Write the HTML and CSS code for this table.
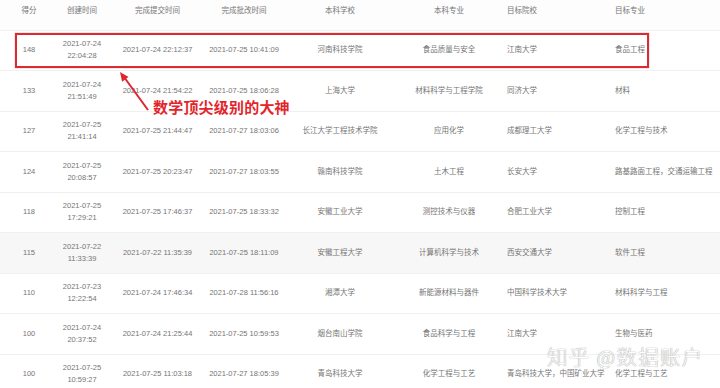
FILE: index.html
```html
<!DOCTYPE html>
<html lang="zh">
<head>
<meta charset="utf-8">
<link rel="stylesheet" href="styles.css">
</head>
<body>
<div class="page">
  <div class="table">
    <div class="row head">
      <div class="c">得分</div><div class="c">创建时间</div><div class="c">完成提交时间</div><div class="c">完成批改时间</div><div class="c">本科学校</div><div class="c">本科专业</div><div class="c l1">目标院校</div><div class="c l2">目标专业</div>
    </div>
    <div class="row">
      <div class="c">148</div><div class="c two"><span>2021-07-24</span><span>22:04:28</span></div><div class="c">2021-07-24 22:12:37</div><div class="c">2021-07-25 10:41:09</div><div class="c">河南科技学院</div><div class="c">食品质量与安全</div><div class="c l1">江南大学</div><div class="c l2">食品工程</div>
    </div>
    <div class="row">
      <div class="c">133</div><div class="c two"><span>2021-07-24</span><span>21:51:49</span></div><div class="c">2021-07-24 21:54:22</div><div class="c">2021-07-25 18:06:28</div><div class="c">上海大学</div><div class="c">材料科学与工程学院</div><div class="c l1">同济大学</div><div class="c l2">材料</div>
    </div>
    <div class="row">
      <div class="c">127</div><div class="c two"><span>2021-07-25</span><span>21:41:14</span></div><div class="c">2021-07-25 21:44:47</div><div class="c">2021-07-27 18:03:06</div><div class="c">长江大学工程技术学院</div><div class="c">应用化学</div><div class="c l1">成都理工大学</div><div class="c l2">化学工程与技术</div>
    </div>
    <div class="row">
      <div class="c">124</div><div class="c two"><span>2021-07-25</span><span>20:08:57</span></div><div class="c">2021-07-25 20:23:47</div><div class="c">2021-07-27 18:03:55</div><div class="c">赣南科技学院</div><div class="c">土木工程</div><div class="c l1">长安大学</div><div class="c l2">路基路面工程，交通运输工程</div>
    </div>
    <div class="row">
      <div class="c">118</div><div class="c two"><span>2021-07-25</span><span>17:29:21</span></div><div class="c">2021-07-25 17:46:37</div><div class="c">2021-07-25 18:33:32</div><div class="c">安徽工业大学</div><div class="c">测控技术与仪器</div><div class="c l1">合肥工业大学</div><div class="c l2">控制工程</div>
    </div>
    <div class="row hover">
      <div class="c">115</div><div class="c two"><span>2021-07-22</span><span>11:33:39</span></div><div class="c">2021-07-22 11:35:39</div><div class="c">2021-07-25 18:11:09</div><div class="c">安徽工程大学</div><div class="c">计算机科学与技术</div><div class="c l1">西安交通大学</div><div class="c l2">软件工程</div>
    </div>
    <div class="row">
      <div class="c">110</div><div class="c two"><span>2021-07-23</span><span>12:22:54</span></div><div class="c">2021-07-24 17:46:34</div><div class="c">2021-07-28 11:56:16</div><div class="c">湘潭大学</div><div class="c">新能源材料与器件</div><div class="c l1">中国科学技术大学</div><div class="c l2">材料科学与工程</div>
    </div>
    <div class="row">
      <div class="c">100</div><div class="c two"><span>2021-07-24</span><span>20:37:52</span></div><div class="c">2021-07-24 21:25:44</div><div class="c">2021-07-25 10:59:53</div><div class="c">烟台南山学院</div><div class="c">食品科学与工程</div><div class="c l1">江南大学</div><div class="c l2">生物与医药</div>
    </div>
    <div class="row">
      <div class="c">100</div><div class="c two"><span>2021-07-25</span><span>10:59:27</span></div><div class="c">2021-07-25 11:03:18</div><div class="c">2021-07-27 18:05:39</div><div class="c">青岛科技大学</div><div class="c">化学工程与工艺</div><div class="c l1">青岛科技大学，中国矿业大学</div><div class="c l2">化学工程与工艺</div>
    </div>
  </div>

  <div class="highlight"></div>
  <svg class="arrow" width="720" height="388" viewBox="0 0 720 388">
    <line x1="148" y1="110" x2="124" y2="77" stroke="#e0262c" stroke-width="2"/>
    <polygon points="120,72 128.5,77 122.1,81.7" fill="#e0262c"/>
  </svg>
  <div class="label">数学顶尖级别的大神</div>
  <div class="watermark">知乎 @数据账户</div>
</div>
</body>
</html>
```

FILE: styles.css
```css
* { box-sizing: border-box; }
html, body { margin: 0; padding: 0; }
body {
  width: 720px;
  height: 388px;
  overflow: hidden;
  background: #fff;
  font-family: "Liberation Sans", "Noto Sans CJK SC", sans-serif;
  color: #757575;
}
.page { position: relative; width: 720px; height: 388px; overflow: hidden; }
.table { display: flex; flex-direction: column; }
.row {
  display: grid;
  grid-template-columns: 58px 48px 103px 70px 122px 96px 110px 113px;
  height: 40.5px;
  align-items: center;
  border-bottom: 1px solid #f0f0f0;
  font-size: 7.5px;
  line-height: 12px;
}
.row.head { height: 30.5px; align-items: start; padding-top: 5px; background: #fdfdfd; }
.row.hover { background: #f7f7f7; }
.c { display: flex; justify-content: center; white-space: nowrap; }
.c.two { flex-direction: column; align-items: center; }
.c.l1 { justify-content: flex-start; padding-left: 10px; }
.c.l2 { justify-content: flex-start; padding-left: 8px; }
.highlight {
  position: absolute;
  left: 15px; top: 33px;
  width: 634px; height: 35px;
  border: 2px solid #dc2a30;
  box-shadow: 0 0 1px rgba(120,0,0,.5);
}
.arrow { position: absolute; left: 0; top: 0; }
.label {
  position: absolute;
  left: 153px; top: 98px;
  font-family: "Noto Sans CJK SC", sans-serif;
  font-weight: 700;
  font-size: 15px;
  line-height: 18px;
  color: #e3252b;
  letter-spacing: 0.2px;
}
.watermark {
  position: absolute;
  left: 547px; top: 343px;
  font-family: "Noto Sans CJK SC", sans-serif;
  font-weight: 300;
  font-size: 20.5px;
  line-height: 26px;
  color: #fff;
  letter-spacing: 1.3px;
  text-shadow: 0 0 1px #999, 0 0 1px #aaa;
}
```
